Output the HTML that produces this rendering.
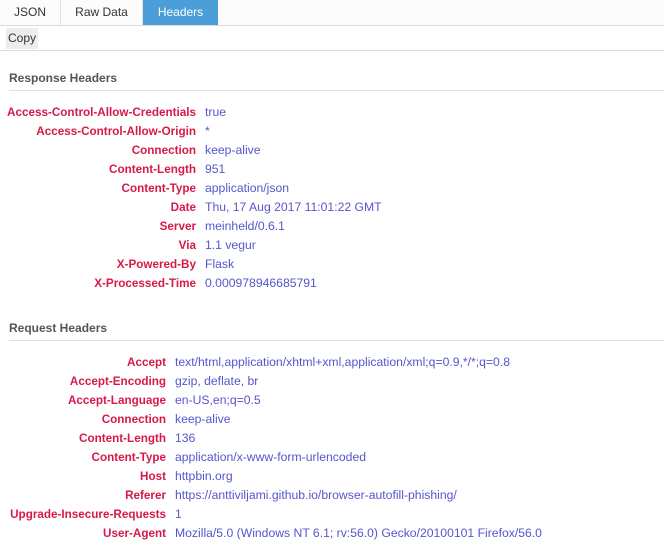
<!DOCTYPE html>
<html><head><style>
*{margin:0;padding:0;box-sizing:border-box}
body{width:664px;height:554px;background:#fff;font-family:"Liberation Sans",sans-serif;font-size:12px;color:#333;position:relative;overflow:hidden}
.tabs{position:absolute;left:0;top:0;width:664px;height:26px;background:#fcfcfc;border-bottom:1px solid #dcdcdc}
.tab{position:absolute;top:0;height:25px;line-height:25px;text-align:center;color:#333;font-size:12px;border-right:1px solid #e0e0e0}
.tab.a{background:#4c9ed9;color:#fff;border:none}
.tb{position:absolute;top:26px;left:0;width:664px;height:25px;border-bottom:1px solid #dcdcdc;background:#fff}
.copy{position:absolute;left:6px;top:2px;width:32px;height:21px;background:#ededed;line-height:21px;text-align:center;color:#333}
.h{position:absolute;left:9px;font-weight:bold;color:#555;font-size:12px}
.line{position:absolute;left:9px;right:0;height:1px;background:#e0e0e0}
.r{position:absolute;height:19px;line-height:19px;font-size:12px;white-space:nowrap}
.k{position:absolute;right:0;font-weight:bold;color:#d7194a;text-align:right;font-size:11.7px}
.v{color:#5656cc;font-size:12.2px}
</style></head><body>
<div class="tabs">
<div class="tab" style="left:0;width:61px">JSON</div>
<div class="tab" style="left:61px;width:82px">Raw Data</div>
<div class="tab a" style="left:143px;width:75px">Headers</div>
</div>
<div class="tb"><div class="copy">Copy</div></div>
<div class="h" style="top:71px">Response Headers</div>
<div class="line" style="top:90px"></div>
<div id="resp"></div>
<div class="h" style="top:321px">Request Headers</div>
<div class="line" style="top:340px"></div>
<div id="req"></div>
<script>
function rows(id,top,edge,data){var c=document.getElementById(id),h='';data.forEach(function(d,i){h+='<div class="r" style="top:'+(top+i*19)+'px;left:0;width:'+edge+'px"><span class="k">'+d[0]+'</span></div><div class="r v" style="top:'+(top+i*19)+'px;left:'+(edge+9)+'px">'+d[1]+'</div>'});c.innerHTML=h}
rows('resp',103,196,[["Access-Control-Allow-Credentials","true"],["Access-Control-Allow-Origin","*"],["Connection","keep-alive"],["Content-Length","951"],["Content-Type","application/json"],["Date","Thu, 17 Aug 2017 11:01:22 GMT"],["Server","meinheld/0.6.1"],["Via","1.1 vegur"],["X-Powered-By","Flask"],["X-Processed-Time","0.000978946685791"]]);
rows('req',353,166,[["Accept","text/html,application/xhtml+xml,application/xml;q=0.9,*/*;q=0.8"],["Accept-Encoding","gzip, deflate, br"],["Accept-Language","en-US,en;q=0.5"],["Connection","keep-alive"],["Content-Length","136"],["Content-Type","application/x-www-form-urlencoded"],["Host","httpbin.org"],["Referer","https://anttiviljami.github.io/browser-autofill-phishing/"],["Upgrade-Insecure-Requests","1"],["User-Agent","Mozilla/5.0 (Windows NT 6.1; rv:56.0) Gecko/20100101 Firefox/56.0"]]);
</script>
</body></html>
